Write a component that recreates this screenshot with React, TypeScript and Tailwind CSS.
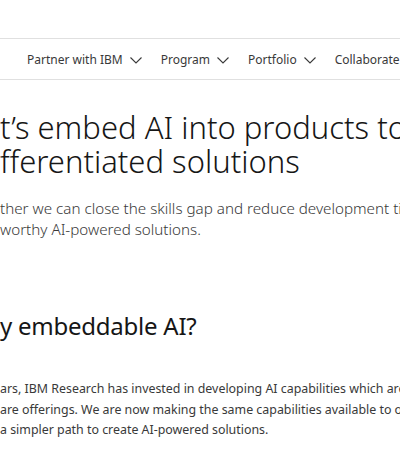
function Chevron() {
  return (
    <svg className="w-[12px] h-[12px] ml-[7px] shrink-0" viewBox="0 0 12 12" fill="none" stroke="currentColor" strokeWidth={1.1}>
      <path d="M0.5 3.5L6 9l5.5-5.5" />
    </svg>
  )
}

export default function App() {
  const nav = [
    { label: "Partner with IBM", menu: true },
    { label: "Program", menu: true },
    { label: "Portfolio", menu: true },
    { label: "Collaborate", menu: false },
  ]

  return (
    <div className="w-[400px] h-[450px] overflow-hidden bg-white text-[#161616] font-['Noto_Sans',sans-serif] whitespace-nowrap">
      {/* masthead */}
      <div className="h-[38px]" />

      {/* sub navigation */}
      <nav className="h-[42px] pt-[1px] border-y border-[#e0e0e0] flex items-center pl-[27px] gap-[19px] text-[12px] text-[#393939]">
        {nav.map((item) => (
          <div key={item.label} className="flex items-center">
            <span>{item.label}</span>
            {item.menu && <Chevron />}
          </div>
        ))}
      </nav>

      {/* hero */}
      <div className="mt-[30px]">
        <h1 className="text-[31px] leading-[34px] font-light">
          <div>t’s embed AI into products to create</div>
          <div>fferentiated solutions</div>
        </h1>
        <p className="mt-[20px] text-[15.2px] leading-[21px] font-light text-[#393939]">
          <span className="block">ther we can close the skills gap and reduce development time to build</span>
          <span className="block">worthy AI-powered solutions.</span>
        </p>
      </div>

      {/* why embeddable */}
      <div className="mt-[72px]">
        <h2 className="text-[24px] leading-[28px] font-normal tracking-[-0.01em]">y embeddable AI?</h2>
        <p className="mt-[39px] text-[12.4px] leading-[20.6px] text-[#393939]">
          <span className="block">ars, IBM Research has invested in developing AI capabilities which are embedded</span>
          <span className="block">are offerings. We are now making the same capabilities available to our ecosystem</span>
          <span className="block">a simpler path to create AI-powered solutions.</span>
        </p>
      </div>
    </div>
  )
}
